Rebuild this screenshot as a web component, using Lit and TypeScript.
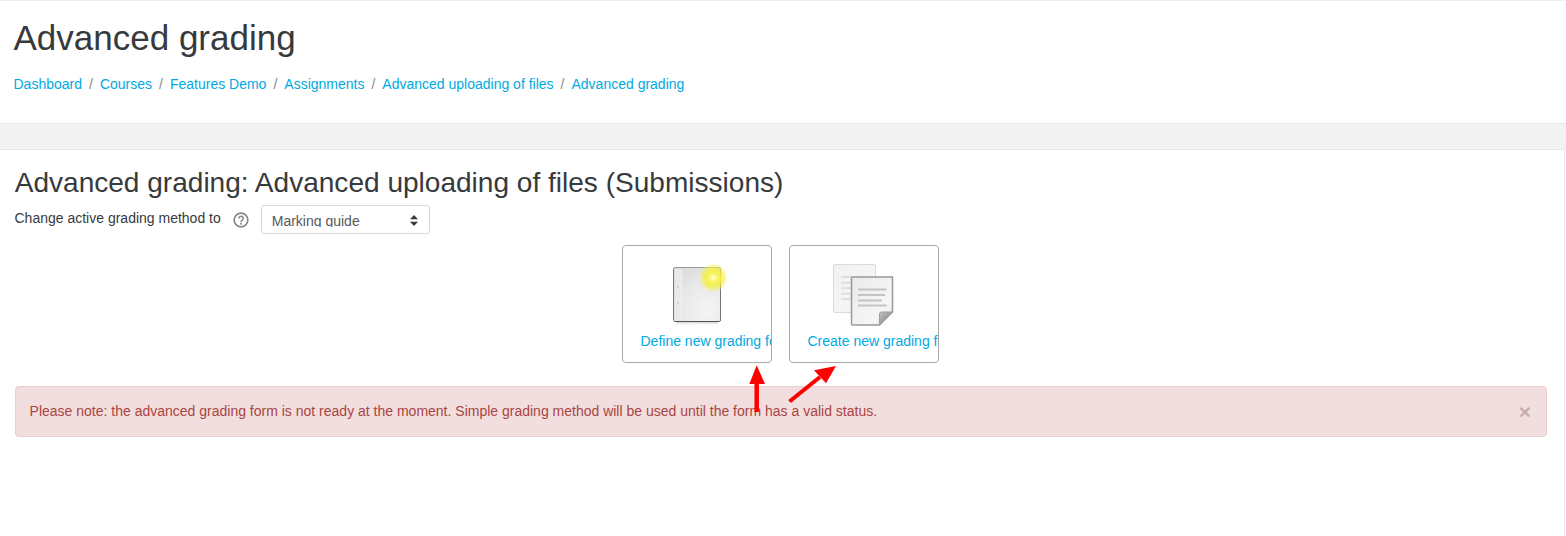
import { LitElement, html, css, svg } from "lit";
import { customElement } from "lit/decorators.js";

const crumbs = ["Dashboard", "Courses", "Features Demo", "Assignments", "Advanced uploading of files", "Advanced grading"];

const defineIcon = svg`<svg class="icon" width="64" height="64" viewBox="0 0 64 64">
  <defs>
    <radialGradient id="pg" cx="0.7" cy="0.8" r="0.9"><stop offset="0" stop-color="#f5f5f5"/><stop offset="0.6" stop-color="#e8e8e8"/><stop offset="1" stop-color="#dcdcdc"/></radialGradient>
    <radialGradient id="glow"><stop offset="0" stop-color="#ffffff"/><stop offset="0.2" stop-color="#fbf87a"/><stop offset="0.5" stop-color="#f6f040" stop-opacity=".92"/><stop offset="0.8" stop-color="#f6f050" stop-opacity=".55"/><stop offset="1" stop-color="#f8f470" stop-opacity="0"/></radialGradient>
    <linearGradient id="sh" x1="0" y1="0" x2="0" y2="1"><stop offset="0" stop-color="#cfcfcf"/><stop offset="1" stop-color="#fff" stop-opacity="0"/></linearGradient>
  </defs>
  <rect x="11" y="58" width="42" height="4" fill="url(#sh)"/>
  <rect x="8.500" y="3.500" width="47" height="54" rx="1.500" fill="url(#pg)" stroke="#999"/>
  <path d="M9.500 57.500h45" stroke="#555"/>
  <path d="M55.500 6v51" stroke="#777"/>
  <path d="M8.500 6v50" stroke="#777"/>
  <rect x="10" y="5" width="6" height="52" fill="#e9e9e9"/>
  <path d="M16.500 5v52" stroke="#f1f1f1"/>
  <rect x="12" y="22" width="1.500" height="1.500" fill="#bbb"/><rect x="12" y="38" width="1.500" height="1.500" fill="#bbb"/>
  <circle cx="48.300" cy="13.700" r="14.500" fill="url(#glow)"/>
</svg>`;

const copyIcon = svg`<svg class="icon" width="64" height="64" viewBox="0 0 64 64">
  <defs>
    <linearGradient id="pa" x1="0" y1="0" x2="1" y2="1"><stop offset="0" stop-color="#f1f1f1"/><stop offset="1" stop-color="#f8f8f8"/></linearGradient>
    <linearGradient id="pb" x1="0" y1="0" x2="1" y2="1"><stop offset="0" stop-color="#e9e9e9"/><stop offset="0.7" stop-color="#f6f6f6"/><stop offset="1" stop-color="#e8e8e8"/></linearGradient>
    <linearGradient id="fold" x1="0" y1="0" x2="1" y2="1"><stop offset="0" stop-color="#c0c0c0"/><stop offset="1" stop-color="#7e7e7e"/></linearGradient>
  </defs>
  <rect x="1.500" y="0.500" width="42" height="48" rx="1.500" fill="url(#pa)" stroke="#dadada"/>
  <path d="M9 13h12M9 18.700h12M9 24.300h12M9 29.700h12M9 35h12" stroke="#dedede" stroke-width="2"/>
  <path d="M20.500 13h40v35l-13 13h-27a1 1 0 0 1-1-1V14a1 1 0 0 1 1-1z" fill="url(#pb)" stroke="#999" stroke-width="1.500"/>
  <path d="M60.500 48h-11a2 2 0 0 0-2 2v11z" fill="url(#fold)" stroke="#a0a0a0"/>
  <path d="M26 25.500h28.500M26 31h27M26 36.500h24M26 41.500h28.500" stroke="#c4c4c4" stroke-width="2"/>
</svg>`;

@customElement("app-root")
export class AppRoot extends LitElement {
  static styles = css`
    :host { display: block; height: 536px; overflow: hidden; position: relative; background: #fff; font-family: "Liberation Sans", Arial, sans-serif; color: #373a3c; border-top: 1px solid #eceeef; box-sizing: border-box; }
    a { color: #00a9e0; text-decoration: none; }
    .header { height: 122px; padding: 14px 14px 0 13.500px; box-sizing: border-box; }
    h1 { margin: 0; font-weight: 400; font-size: 35px; line-height: 46px; color: #373a3c; }
    .crumbs { display: flex; margin: 13px 0 0; padding: 0; list-style: none; font-size: 14px; line-height: 21px; }
    .crumbs li + li::before { content: "/"; color: #818a91; padding: 0 7px; }
    .band { height: 25px; background: #f3f3f3; border-top: 1px solid #e8e8e8; border-bottom: 1px solid #e8e8e8; }
    .main { margin-right: 1px; border-right: 1px solid #e8e8e8; padding: 15px 17px 0 15px; height: 387px; box-sizing: border-box; }
    h2 { margin: 0 0 0 -0.300px; font-weight: 400; font-size: 28.060px; line-height: 36px; color: #373a3c; }
    .method { display: flex; align-items: flex-start; margin: 4px 0 0 -0.500px; font-size: 14px; line-height: 21px; }
    .method .label { margin-top: 3px; }
    .help { margin: 7px 12px 0; width: 16px; height: 16px; }
    .select { width: 169px; height: 29px; box-sizing: border-box; border: 1px solid #d7dadc; border-radius: 3px; padding: 7px 11px 0 10px; display: flex; justify-content: space-between; overflow: hidden; color: #55595c; line-height: 16px; }
    .select span { height: 14px; overflow: hidden; display: block; line-height: 16px; }
    .caret { margin-top: 2px; }
    .actions { display: flex; justify-content: center; gap: 17px; margin-top: 11px; padding-right: 1px; }
    .action { width: 150px; height: 118px; box-sizing: border-box; border: 1px solid #a8a8a8; border-radius: 4px; overflow: hidden; display: block; white-space: nowrap; font-size: 14px; line-height: 21px; }
    .icon { display: block; margin: 18px 0 0 42px; }
    .action .text { display: block; margin: 3px 0 0 17.500px; }
    .alert { margin-top: 23px; height: 51px; box-sizing: border-box; border: 1px solid #ebcccc; border-radius: 4px; background: #f2dede; color: #a94442; padding: 14px 14px 14px 13.600px; font-size: 14px; line-height: 21px; display: flex; justify-content: space-between; }
    .close { font-weight: 700; font-size: 21px; line-height: 22px; color: #c6aeae; margin: 0 1px 0 0; }
    .arrows { position: absolute; left: 740px; top: 360px; width: 100px; height: 55px; pointer-events: none; }
  `;

  render() {
    return html`
      <div class="header">
        <h1>Advanced grading</h1>
        <ol class="crumbs">${crumbs.map((c) => html`<li><a href="#">${c}</a></li>`)}</ol>
      </div>
      <div class="band"></div>
      <div class="main">
        <h2>Advanced grading: Advanced uploading of files (Submissions)</h2>
        <div class="method">
          <span class="label">Change active grading method to</span>
          <svg class="help" viewBox="0 0 16 16"><circle cx="8" cy="8" r="6.800" fill="none" stroke="#8a8a8a" stroke-width="1.700"/><path d="M5.800 6.400a2.200 2.100 0 1 1 3.500 1.700c-.9.6-1.300 1-1.300 1.900" fill="none" stroke="#8a8a8a" stroke-width="1.600"/><rect x="7.100" y="10.800" width="1.800" height="1.800" fill="#8a8a8a"/></svg>
          <div class="select"><span>Marking guide</span><svg class="caret" width="8" height="11" viewBox="0 0 8 11"><path d="M4 0l4 4.300H0zM4 11L0 6.700h8z" fill="#373a3c"/></svg></div>
        </div>
        <div class="actions">
          <a class="action" href="#">${defineIcon}<span class="text">Define new grading form from scratch</span></a>
          <a class="action" href="#">${copyIcon}<span class="text">Create new grading form from a template</span></a>
        </div>
        <div class="alert"><span>Please note: the advanced grading form is not ready at the moment. Simple grading method will be used until the form has a valid status.</span><span class="close">×</span></div>
      </div>
      <svg class="arrows" viewBox="0 0 100 55">
        <path d="M16.700 51V20" stroke="#f00" stroke-width="4.500" fill="none"/><path d="M16.700 4.300L25 23H9.300z" fill="#f00"/>
        <path d="M49.500 40.500L80 16" stroke="#f00" stroke-width="4" fill="none"/><path d="M96 5L86 22.300 74 9.300z" fill="#f00"/>
      </svg>
    `;
  }
}
